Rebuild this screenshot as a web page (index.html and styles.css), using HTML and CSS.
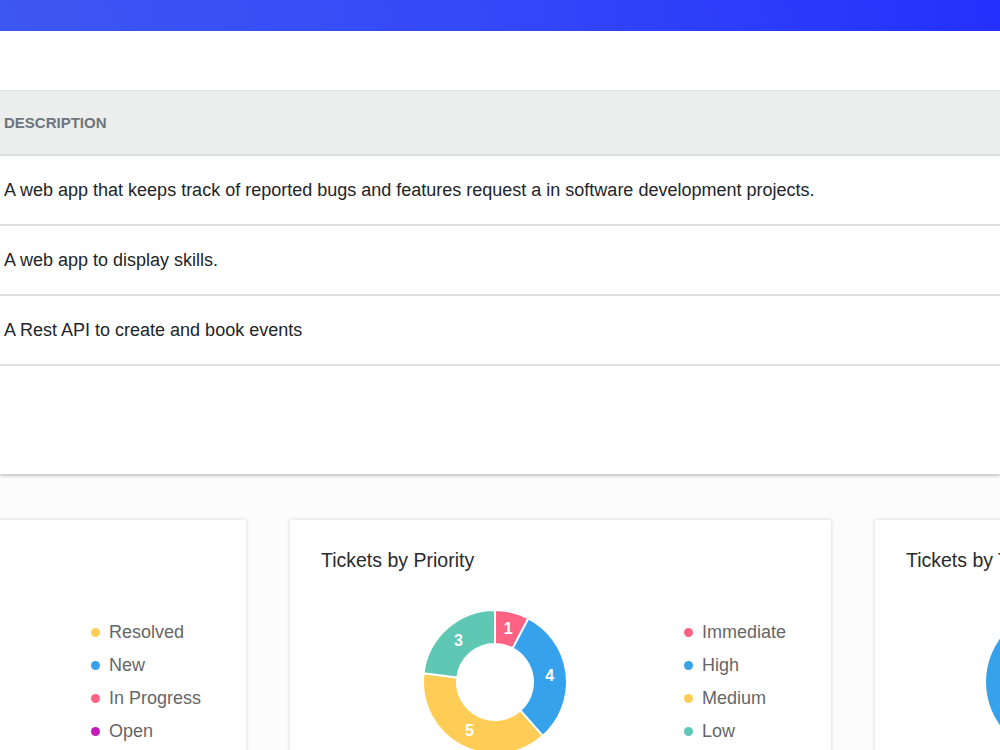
FILE: index.html
```html
<!DOCTYPE html>
<html lang="en">
<head>
<meta charset="utf-8">
<title>Dashboard</title>
<link rel="stylesheet" href="styles.css">
</head>
<body>
<section class="table-card">
  <div class="table-card-header"></div>
  <div class="table-card-body">
    <table class="projects">
      <thead>
        <tr><th>Description</th></tr>
      </thead>
      <tbody>
        <tr><td>A web app that keeps track of reported bugs and features request a in software development projects.</td></tr>
        <tr><td>A web app to display skills.</td></tr>
        <tr><td>A Rest API to create and book events</td></tr>
      </tbody>
    </table>
  </div>
</section>

<section class="charts">
  <div class="chart-card">
    <h3 class="chart-title">Tickets by Status</h3>
    <div class="chart-body">
      <svg class="donut" width="150" height="150" viewBox="0 0 150 150"></svg>
      <ul class="legend legend-status">
        <li><span class="dot" style="background:#ffcd56"></span>Resolved</li>
        <li><span class="dot" style="background:#36a2eb"></span>New</li>
        <li><span class="dot" style="background:#ff6384"></span>In Progress</li>
        <li><span class="dot" style="background:#c41cb6"></span>Open</li>
      </ul>
    </div>
  </div>

  <div class="chart-card">
    <h3 class="chart-title">Tickets by Priority</h3>
    <div class="chart-body">
      <svg class="donut" width="150" height="150" viewBox="0 0 150 150">
        <g stroke="#fff" stroke-width="2" stroke-linejoin="round">
          <path fill="#ff6384" d="M75 3 A72 72 0 0 1 108.46 11.24 L92.66 41.35 A38 38 0 0 0 75 37 Z"/>
          <path fill="#36a2eb" d="M108.46 11.24 A72 72 0 0 1 122.74 128.89 L100.20 103.44 A38 38 0 0 0 92.66 41.35 Z"/>
          <path fill="#ffcd56" d="M122.74 128.89 A72 72 0 0 1 3.53 66.32 L37.28 70.42 A38 38 0 0 0 100.20 103.44 Z"/>
          <path fill="#5fc8b4" d="M3.53 66.32 A72 72 0 0 1 75 3 L75 37 A38 38 0 0 0 37.28 70.42 Z"/>
        </g>
        <g class="seg-label" fill="#fff" text-anchor="middle" dominant-baseline="central">
          <text x="88.2" y="21.6">1</text>
          <text x="129.6" y="68.4">4</text>
          <text x="49.4" y="123.7">5</text>
          <text x="38.5" y="33.8">3</text>
        </g>
      </svg>
      <ul class="legend legend-priority">
        <li><span class="dot" style="background:#ff6384"></span>Immediate</li>
        <li><span class="dot" style="background:#36a2eb"></span>High</li>
        <li><span class="dot" style="background:#ffcd56"></span>Medium</li>
        <li><span class="dot" style="background:#5fc8b4"></span>Low</li>
      </ul>
    </div>
  </div>

  <div class="chart-card">
    <h3 class="chart-title">Tickets by Type</h3>
    <div class="chart-body">
      <svg class="pie" width="148" height="148" viewBox="0 0 148 148">
        <circle cx="74" cy="74" r="74" fill="#36a2eb"/>
      </svg>
    </div>
  </div>
</section>
</body>
</html>
```

FILE: styles.css
```css
html, body {
  margin: 0;
  padding: 0;
  overflow: hidden;
}

body {
  background: #fcfcfc;
  font-family: "Liberation Sans", Arial, sans-serif;
  color: #212529;
}

.table-card {
  background: #fff;
  box-shadow: 0 2px 3px rgba(0, 0, 0, 0.22);
}

.table-card-header {
  height: 31px;
  background: linear-gradient(75deg, #3d57f2 0%, #3448f8 50%, #2430fb 100%);
}

.table-card-body {
  padding: 59px 0 108px;
}

.projects {
  width: 100%;
  border-collapse: collapse;
}

.projects th {
  height: 63px;
  padding: 0 4px;
  text-align: left;
  vertical-align: middle;
  background: #eceded;
  color: #6c757d;
  font-size: 15px;
  font-weight: 700;
  text-transform: uppercase;
  border-top: 1px solid #dcdfe2;
  border-bottom: 2px solid #dcdfe2;
}

.projects td {
  height: 68px;
  padding: 0 4px;
  vertical-align: middle;
  font-size: 18px;
  color: #212529;
  border-bottom: 2px solid #dedede;
}

.charts {
  display: flex;
  gap: 44px;
  margin: 46px 0 0 -295px;
}

.chart-card {
  flex: 0 0 541px;
  box-sizing: border-box;
  height: 320px;
  padding: 28px 31px 0;
  background: #fff;
  box-shadow: 0 0 4px rgba(0, 0, 0, 0.16);
}

.chart-title {
  margin: 0;
  font-size: 19.5px;
  line-height: 24px;
  font-weight: 400;
  color: #2a2a2a;
}

.chart-body {
  display: flex;
  align-items: center;
  margin-top: 35px;
}

.donut {
  flex: none;
  margin-left: 99px;
  display: block;
}

.pie {
  flex: none;
  margin-left: 80px;
  margin-top: 1px;
  display: block;
}

.seg-label {
  font-family: "Liberation Sans", Arial, sans-serif;
  font-size: 16px;
  font-weight: 700;
}

.legend {
  list-style: none;
  margin: 0;
  padding: 0;
}

.legend-priority {
  margin-left: 114px;
}

.legend-status {
  margin-left: 106px;
}

.legend li {
  display: flex;
  align-items: center;
  height: 33px;
  font-size: 18px;
  color: #666;
}

.dot {
  width: 9px;
  height: 9px;
  border-radius: 50%;
  margin-right: 9px;
  flex: none;
}
```
